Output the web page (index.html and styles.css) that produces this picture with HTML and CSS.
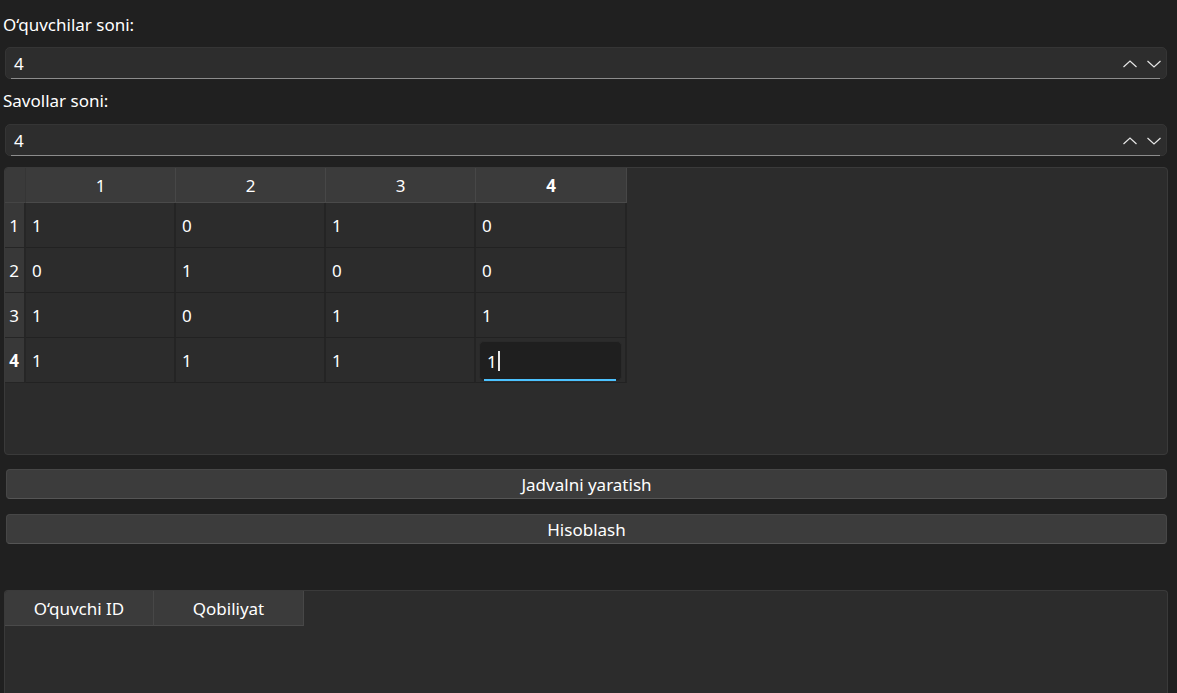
FILE: index.html
```html
<!DOCTYPE html>
<html>
<head>
<meta charset="utf-8">
<link rel="stylesheet" href="styles.css">
</head>
<body>
<div class="app">
  <div class="label label-first">O‘quvchilar soni:</div>
  <div class="spin">
    <span class="spin-value">4</span>
    <span class="spin-arrows">
      <svg width="16" height="10" viewBox="0 0 16 10"><path d="M1.5 8 L8 2 L14.5 8" fill="none" stroke="#e6e6e6" stroke-width="1.2"/></svg>
      <svg width="16" height="10" viewBox="0 0 16 10"><path d="M1.5 2 L8 8 L14.5 2" fill="none" stroke="#e6e6e6" stroke-width="1.2"/></svg>
    </span>
  </div>
  <div class="label label-second">Savollar soni:</div>
  <div class="spin">
    <span class="spin-value">4</span>
    <span class="spin-arrows">
      <svg width="16" height="10" viewBox="0 0 16 10"><path d="M1.5 8 L8 2 L14.5 8" fill="none" stroke="#e6e6e6" stroke-width="1.2"/></svg>
      <svg width="16" height="10" viewBox="0 0 16 10"><path d="M1.5 2 L8 8 L14.5 2" fill="none" stroke="#e6e6e6" stroke-width="1.2"/></svg>
    </span>
  </div>

  <div class="frame grid-frame">
    <div class="grid">
      <div class="corner"></div>
      <div class="hcell">1</div>
      <div class="hcell">2</div>
      <div class="hcell">3</div>
      <div class="hcell bold">4</div>

      <div class="rhead">1</div>
      <div class="cell">1</div><div class="cell">0</div><div class="cell">1</div><div class="cell">0</div>

      <div class="rhead">2</div>
      <div class="cell">0</div><div class="cell">1</div><div class="cell">0</div><div class="cell">0</div>

      <div class="rhead">3</div>
      <div class="cell">1</div><div class="cell">0</div><div class="cell">1</div><div class="cell">1</div>

      <div class="rhead bold">4</div>
      <div class="cell">1</div><div class="cell">1</div><div class="cell">1</div>
      <div class="cell edit-cell"><div class="editor"><span>1</span><span class="caret"></span></div></div>
    </div>
  </div>

  <div class="btn btn-first">Jadvalni yaratish</div>
  <div class="btn btn-second">Hisoblash</div>

  <div class="frame result-frame">
    <div class="rgrid">
      <div class="hcell">O‘quvchi ID</div>
      <div class="hcell">Qobiliyat</div>
    </div>
  </div>
</div>
</body>
</html>
```

FILE: styles.css
```css
html, body {
  margin: 0;
  padding: 0;
  background: #202020;
  overflow: hidden;
}
body {
  font-family: "Noto Sans", "Open Sans", sans-serif;
  font-size: 17px;
  color: #ffffff;
  width: 1177px;
  height: 693px;
}
.app {
  display: flex;
  flex-direction: column;
  padding-left: 4px;
  width: 1164px;
}
.label {
  height: 20px;
  line-height: 20px;
  margin-left: -1px;
}
.label-first { margin-top: 15px; margin-bottom: 12px; }
.label-second { margin-top: 12px; margin-bottom: 13px; }

.spin {
  position: relative;
  height: 32px;
  margin: 0 1px;
  box-sizing: border-box;
  background: #2d2d2d;
  border: 1px solid #353535;
  border-radius: 5px;
  display: flex;
  align-items: center;
  justify-content: space-between;
  padding: 0 4px 0 8px;
}
.spin::after {
  content: "";
  position: absolute;
  left: 5px;
  right: 6px;
  bottom: -1px;
  height: 1px;
  background: #8c8c8c;
}
.spin-value { padding-top: 1px; }
.spin-arrows {
  display: flex;
  gap: 8px;
  align-items: center;
  padding-top: 2px;
}
.spin-arrows svg { display: block; }

.frame {
  box-sizing: border-box;
  background: #2c2c2c;
  border: 1px solid #3a3a3a;
  border-radius: 4px;
  overflow: hidden;
}
.grid-frame {
  margin-top: 11px;
  height: 288px;
}
.grid {
  display: grid;
  grid-template-columns: 21px 150px 150px 150px 151px;
  grid-template-rows: 35px 45px 45px 45px 45px;
  width: 622px;
}
.corner {
  background: #3a3a3a;
  border-right: 1px solid #353535;
  border-bottom: 1px solid #454545;
}
.hcell {
  background: #3b3b3b;
  border-right: 1px solid #474747;
  border-bottom: 1px solid #4a4a4a;
  display: flex;
  align-items: center;
  justify-content: center;
  box-sizing: border-box;
}
.bold { font-weight: 700; }
.rhead {
  background: #383838;
  border-bottom: 1px solid #252525;
  border-right: 2px solid #262626;
  display: flex;
  align-items: center;
  justify-content: flex-end;
  padding-right: 5px;
  padding-top: 1px;
  box-sizing: border-box;
}
.cell {
  background: #2c2c2c;
  border-right: 2px solid #242424;
  border-bottom: 1px solid #222222;
  box-sizing: border-box;
  display: flex;
  align-items: center;
  padding-left: 6px;
}
.edit-cell {
  padding: 3px 3px 1px 3px;
  align-items: stretch;
}
.editor {
  flex: 1;
  position: relative;
  background: #1f1f1f;
  border: 1px solid #2a2a2a;
  border-radius: 5px;
  display: flex;
  align-items: center;
  padding-left: 7px;
}
.editor::after {
  content: "";
  position: absolute;
  left: 4px;
  right: 5px;
  bottom: -1px;
  height: 2px;
  background: #4cc2ff;
}
.caret {
  display: inline-block;
  width: 2px;
  height: 20px;
  background: #e8e8e8;
  margin-left: 1px;
}

.btn {
  box-sizing: border-box;
  height: 30px;
  margin: 0 1px 0 2px;
  background: #3c3c3c;
  border: 1px solid #474747;
  border-bottom-color: #555555;
  border-radius: 4px;
  display: flex;
  align-items: center;
  justify-content: center;
}
.btn-first { margin-top: 14px; }
.btn-second { margin-top: 15px; }

.result-frame {
  margin-top: 46px;
  height: 120px;
  border-bottom: none;
  border-radius: 4px 4px 0 0;
}
.rgrid {
  display: grid;
  grid-template-columns: 149px 150px;
  grid-template-rows: 35px;
  width: 299px;
}
```
